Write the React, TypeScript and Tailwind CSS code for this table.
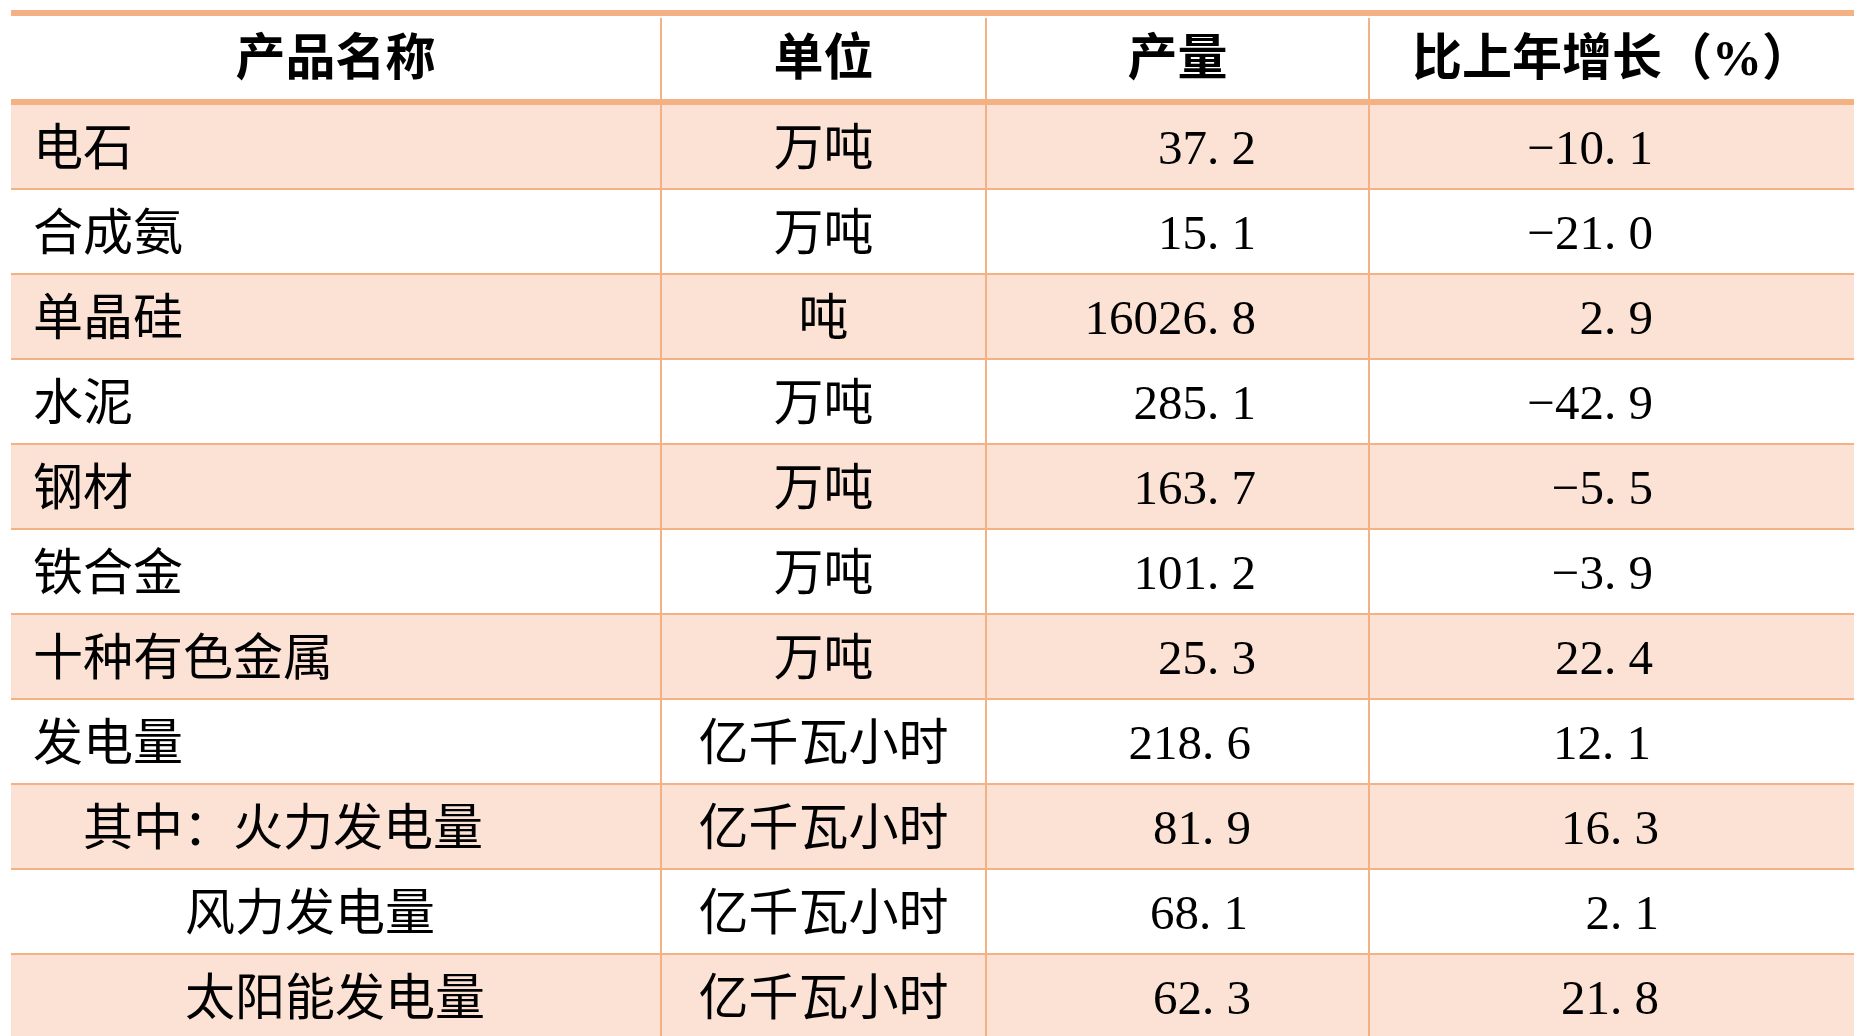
import React from 'react';

type Row = {
  name: string;
  unit: string;
  output: string;
  growth: string;
  indent: string;
  outPad: string;
  growPad: string;
};

const ROWS: Row[] = [
  { name: '电石', unit: '万吨', output: '37.2', growth: '-10.1', indent: 'pl-[22px]', outPad: 'pr-[112px]', growPad: 'pr-[201px]' },
  { name: '合成氨', unit: '万吨', output: '15.1', growth: '-21.0', indent: 'pl-[22px]', outPad: 'pr-[112px]', growPad: 'pr-[201px]' },
  { name: '单晶硅', unit: '吨', output: '16026.8', growth: '2.9', indent: 'pl-[22px]', outPad: 'pr-[112px]', growPad: 'pr-[201px]' },
  { name: '水泥', unit: '万吨', output: '285.1', growth: '-42.9', indent: 'pl-[22px]', outPad: 'pr-[112px]', growPad: 'pr-[201px]' },
  { name: '钢材', unit: '万吨', output: '163.7', growth: '-5.5', indent: 'pl-[22px]', outPad: 'pr-[112px]', growPad: 'pr-[201px]' },
  { name: '铁合金', unit: '万吨', output: '101.2', growth: '-3.9', indent: 'pl-[22px]', outPad: 'pr-[112px]', growPad: 'pr-[201px]' },
  { name: '十种有色金属', unit: '万吨', output: '25.3', growth: '22.4', indent: 'pl-[22px]', outPad: 'pr-[112px]', growPad: 'pr-[201px]' },
  { name: '发电量', unit: '亿千瓦小时', output: '218.6', growth: '12.1', indent: 'pl-[22px]', outPad: 'pr-[117px]', growPad: 'pr-[203px]' },
  { name: '其中：火力发电量', unit: '亿千瓦小时', output: '81.9', growth: '16.3', indent: 'pl-[72px]', outPad: 'pr-[117px]', growPad: 'pr-[195px]' },
  { name: '风力发电量', unit: '亿千瓦小时', output: '68.1', growth: '2.1', indent: 'pl-[174px]', outPad: 'pr-[120px]', growPad: 'pr-[195px]' },
  { name: '太阳能发电量', unit: '亿千瓦小时', output: '62.3', growth: '21.8', indent: 'pl-[174px]', outPad: 'pr-[117px]', growPad: 'pr-[195px]' },
];

// numbers: wide minus, half-em box for the decimal point
const Num: React.FC<{ value: string }> = ({ value }) => {
  const [whole, frac] = value.replace('-', '\u2212').split('.');
  return (
    <span className="whitespace-nowrap">
      {whole}
      <span className="inline-block w-[0.5em] text-left">.</span>
      {frac}
    </span>
  );
};

const App: React.FC = () => {
  return (
    <div className="h-screen w-full overflow-hidden bg-white font-['Liberation_Serif','Noto_Sans_CJK_SC',serif] text-black">
      <div className="ml-[11px] mt-[10px] w-[1843px]">
        <div className="flex h-[95px] border-y-[6px] border-[#f4b183] pt-[2px] text-[50px] font-bold">
          <div className="flex w-[649px] items-center justify-center">产品名称</div>
          <div className="flex w-[325px] items-center justify-center border-l-2 border-[#f4b183]">单位</div>
          <div className="flex w-[383px] items-center justify-center border-l-2 border-[#f4b183]">产量</div>
          <div className="flex w-[486px] items-center justify-center border-l-2 border-[#f4b183]">比上年增长（%）</div>
        </div>

        {ROWS.map((r, i) => (
          <div
            key={r.name}
            className={`flex h-[85px] border-b-2 border-[#f4b183] ${i % 2 === 0 ? 'bg-[#fbe2d5]' : 'bg-white'}`}
          >
            <div className={`flex w-[649px] items-center pt-[3px] text-[50px] ${r.indent}`}>{r.name}</div>
            <div className="flex w-[325px] items-center justify-center border-l-2 border-[#f4b183] pt-[3px] text-[50px]">{r.unit}</div>
            <div className={`flex w-[383px] items-center justify-end border-l-2 border-[#f4b183] pt-[2px] text-[49px] ${r.outPad}`}>
              <Num value={r.output} />
            </div>
            <div className={`flex w-[486px] items-center justify-end border-l-2 border-[#f4b183] pt-[2px] text-[49px] ${r.growPad}`}>
              <Num value={r.growth} />
            </div>
          </div>
        ))}
      </div>
    </div>
  );
};

export default App;
